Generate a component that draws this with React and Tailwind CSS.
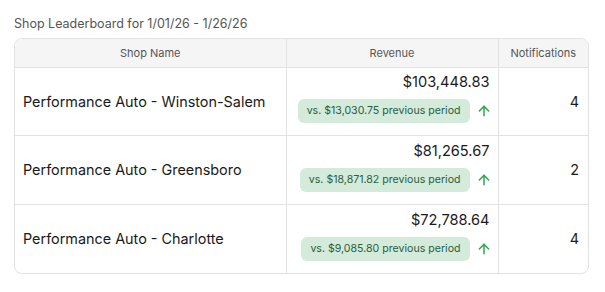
import { ArrowUp } from 'lucide-react';

const rows = [
  { name: 'Performance Auto - Winston-Salem', revenue: '$103,448.83', prev: '$13,030.75', notifications: 4 },
  { name: 'Performance Auto - Greensboro', revenue: '$81,265.67', prev: '$18,871.82', notifications: 2 },
  { name: 'Performance Auto - Charlotte', revenue: '$72,788.64', prev: '$9,085.80', notifications: 4 },
];

const App = () => {
  return (
    <div className="w-[605px] h-[292px] bg-white px-[14px] pt-[16px] font-['Inter',sans-serif]">
      <h2 className="text-[12.5px] leading-[16px] text-[#555] mb-[6px]">
        Shop Leaderboard for 1/01/26 - 1/26/26
      </h2>
      <div className="w-[575px] border border-[#e2e2e2] rounded-[8px] overflow-hidden">
        <table className="w-full border-collapse table-fixed">
          <thead>
            <tr className="bg-[#f5f5f5] h-[28px] text-[11px] text-[#555]">
              <th className="w-[271px] font-normal border-r border-[#e2e2e2]">Shop Name</th>
              <th className="w-[212px] font-normal border-r border-[#e2e2e2]">Revenue</th>
              <th className="font-normal">Notifications</th>
            </tr>
          </thead>
          <tbody>
            {rows.map((row) => (
              <tr key={row.name} className="h-[68.7px] border-t border-[#e2e2e2]">
                <td className="px-[8px] text-[14.4px] text-[#1a1a1a] border-r border-[#e2e2e2] whitespace-nowrap">
                  {row.name}
                </td>
                <td className="pl-[6px] pr-[8px] pb-[6px] border-r border-[#e2e2e2]">
                  <div className="flex flex-col items-end gap-[8px]">
                    <span className="text-[14.6px] leading-[18px] text-[#1a1a1a]">{row.revenue}</span>
                    <div className="flex items-center gap-[6px] whitespace-nowrap">
                      <span className="shrink-0 bg-[#d4eadb] text-[#2b5e3b] text-[10.6px] leading-[14px] rounded-[6px] px-[9px] py-[5px]">
                        vs. {row.prev} previous period
                      </span>
                      <ArrowUp className="shrink-0 w-[16px] h-[16px] text-[#34a853] -mr-[2px]" strokeWidth={2.3} />
                    </div>
                  </div>
                </td>
                <td className="px-[9px] text-right text-[14.4px] text-[#1a1a1a]">
                  {row.notifications}
                </td>
              </tr>
            ))}
          </tbody>
        </table>
      </div>
    </div>
  );
};

export default App;
